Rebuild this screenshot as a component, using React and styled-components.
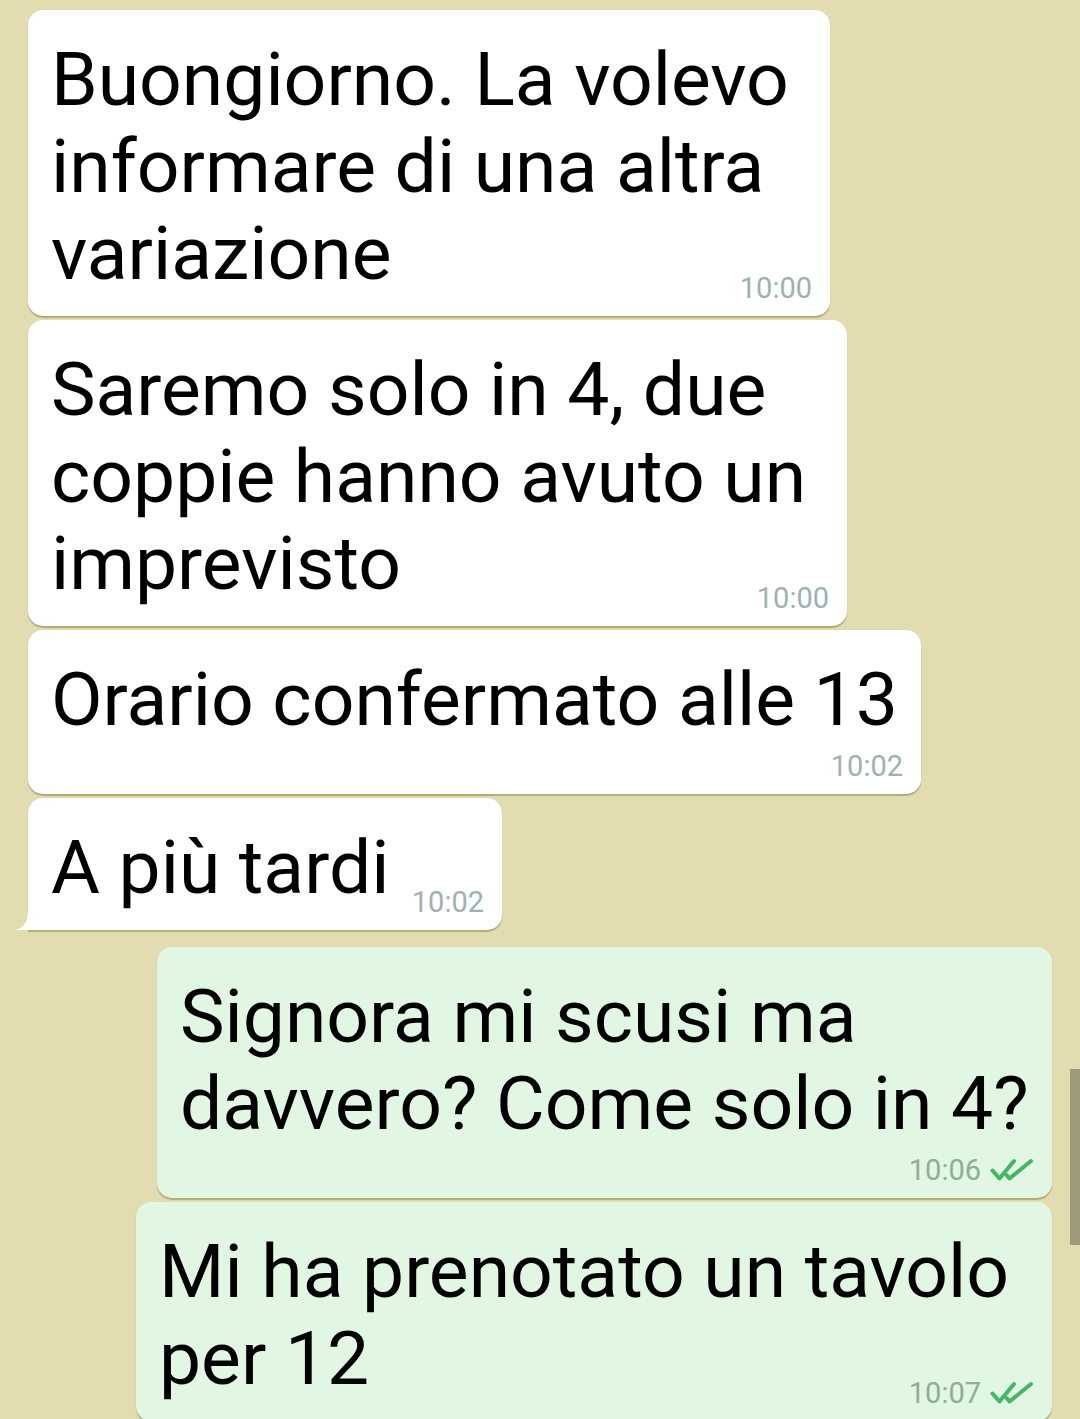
import styled, { createGlobalStyle } from 'styled-components';

const GlobalStyle = createGlobalStyle`
  html, body {
    margin: 0;
    padding: 0;
    background: #e3dcb0;
  }
  body {
    font-family: Roboto, 'Noto Sans', sans-serif;
    overflow: hidden;
  }
`;

const Chat = styled.div`
  display: flex;
  flex-direction: column;
  gap: 4px;
  padding: 10px 28px 0;
`;

const Bubble = styled.div`
  position: relative;
  box-sizing: border-box;
  width: ${(p) => p.$w}px;
  align-self: ${(p) => (p.$out ? 'flex-end' : 'flex-start')};
  margin-top: ${(p) => (p.$newGroup ? '13px' : '0')};
  display: flex;
  flex-direction: column;
  padding: 26px 18px 18px 23px;
  background: ${(p) => (p.$out ? '#e2f7e3' : '#ffffff')};
  border-radius: 15px;
  border-bottom-left-radius: ${(p) => (p.$tail ? '0' : '15px')};
  box-shadow: 0 1.5px 1px rgba(120, 110, 50, 0.45);

  ${(p) =>
    p.$tail &&
    `
    &::before {
      content: '';
      position: absolute;
      left: -14px;
      bottom: 0;
      width: 14px;
      height: 16px;
      background: radial-gradient(ellipse 14px 16px at 0 0, transparent 96%, #ffffff 100%);
    }
  `}
`;

const Text = styled.div`
  font-size: 75px;
  line-height: 87px;
  color: #000;
  white-space: nowrap;
`;

const Meta = styled.div`
  align-self: flex-end;
  display: flex;
  align-items: center;
  gap: 9px;
  margin-top: ${(p) => (p.$below ? '13px' : '-19px')};
  font-size: 29px;
  line-height: 20px;
  height: 20px;
  color: ${(p) => (p.$out ? '#8eae98' : '#9fb1b1')};
`;

const Ticks = () => (
  <svg width="44" height="24" viewBox="0 0 44 24" fill="none">
    <path d="M2.5 12.5 L9.5 20.5 L24 3" stroke="#45b566" strokeWidth="4" strokeLinecap="round" strokeLinejoin="round" />
    <path d="M16.5 17 L19.5 20.5 L41 3" stroke="#45b566" strokeWidth="4" strokeLinecap="round" strokeLinejoin="round" />
  </svg>
);

const Scrollbar = styled.div`
  position: fixed;
  right: 0;
  top: 1069px;
  width: 10px;
  height: 176px;
  background: #9f9a7c;
`;

const messages = [
  { w: 802, lines: ['Buongiorno. La volevo', 'informare di una altra', 'variazione'], time: '10:00' },
  { w: 819, lines: ['Saremo solo in 4, due', 'coppie hanno avuto un', 'imprevisto'], time: '10:00' },
  { w: 893, lines: ['Orario confermato alle 13'], time: '10:02', below: true },
  { w: 474, lines: ['A più tardi'], time: '10:02', tail: true },
  { w: 895, lines: ['Signora mi scusi ma', 'davvero? Come solo in 4?'], time: '10:06', below: true, out: true, newGroup: true },
  { w: 916, lines: ['Mi ha prenotato un tavolo', 'per 12'], time: '10:07', out: true },
];

export default function App() {
  return (
    <>
      <GlobalStyle />
      <Chat>
        {messages.map((m, i) => (
          <Bubble key={i} $w={m.w} $out={m.out} $tail={m.tail} $newGroup={m.newGroup}>
            <Text>
              {m.lines.map((l, j) => (
                <div key={j}>{l}</div>
              ))}
            </Text>
            <Meta $below={m.below} $out={m.out}>
              <span>{m.time}</span>
              {m.out && <Ticks />}
            </Meta>
          </Bubble>
        ))}
      </Chat>
      <Scrollbar />
    </>
  );
}
